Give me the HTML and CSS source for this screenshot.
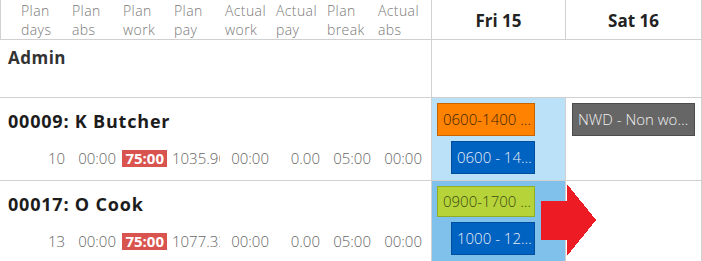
FILE: index.html
```html
<!DOCTYPE html>
<html lang="en">
<head>
  <meta charset="UTF-8">
  <title>Roster</title>
  <meta name="viewport" content="width=device-width, initial-scale=1.0" />
  <link rel="stylesheet" href="styles.css">
</head>
<body>
  <div class="sheet">
    <!-- header -->
    <div class="row head">
      <div class="left head-left">
        <div class="cols">
          <div class="hcol">Plan<br>days</div>
          <div class="hcol">Plan<br>abs</div>
          <div class="hcol">Plan<br>work</div>
          <div class="hcol">Plan<br>pay</div>
          <div class="hcol">Actual<br>work</div>
          <div class="hcol">Actual<br>pay</div>
          <div class="hcol">Plan<br>break</div>
          <div class="hcol">Actual<br>abs</div>
        </div>
      </div>
      <div class="day">Fri 15</div>
      <div class="day last">Sat 16</div>
    </div>

    <!-- group -->
    <div class="row group">
      <div class="left"><div class="group-name">Admin</div></div>
      <div class="span-days"></div>
    </div>

    <div class="row emp">
      <div class="left">
        <div class="emp-name">00009: K Butcher</div>
        <div class="cols data">
          <div class="dcol">10</div>
          <div class="dcol">00:00</div>
          <div class="dcol"><span class="over">75:00</span></div>
          <div class="dcol">1035.90</div>
          <div class="dcol">00:00</div>
          <div class="dcol">0.00</div>
          <div class="dcol">05:00</div>
          <div class="dcol">00:00</div>
        </div>
      </div>
      <div class="cell fri light">
        <div class="shift orange">0600-1400 …</div>
        <div class="shift blue">0600 - 14…</div>
      </div>
      <div class="cell sat">
        <div class="shift grey">NWD - Non wo…</div>
      </div>
    </div>

    <div class="row emp">
      <div class="left">
        <div class="emp-name">00017: O Cook</div>
        <div class="cols data">
          <div class="dcol">13</div>
          <div class="dcol">00:00</div>
          <div class="dcol"><span class="over">75:00</span></div>
          <div class="dcol">1077.33</div>
          <div class="dcol">00:00</div>
          <div class="dcol">0.00</div>
          <div class="dcol">05:00</div>
          <div class="dcol">00:00</div>
        </div>
      </div>
      <div class="cell fri mid">
        <div class="shift green">0900-1700 …</div>
        <div class="shift blue">1000 - 12…</div>
      </div>
      <div class="cell sat"></div>
    </div>
  </div>

  <svg class="arrow" width="56" height="74" viewBox="0 0 56 74" shape-rendering="crispEdges">
    <polygon points="0,17 26,17 26,0 55,36 26,72 26,56 0,56" fill="#ed1c24"/>
  </svg>
</body>
</html>
```

FILE: styles.css
```css
html, body {
    margin: 0;
    padding: 0;
    background: #fff;
}

body {
    font-family: "Open Sans", "Lato", sans-serif;
    color: #222;
    position: relative;
    width: 702px;
    height: 261px;
    overflow: hidden;
}

.sheet {
    display: flex;
    flex-direction: column;
}

.row {
    display: grid;
    grid-template-columns: 431px 134px 137px;
    border-bottom: 1px solid #d0d0d0;
}

.row:last-child {
    border-bottom: none;
}

.head {
    height: 39px;
}

.head-left {
    border-left: 1px solid #d0d0d0;
    box-sizing: border-box;
}

.cols {
    display: flex;
    padding-left: 16px;
}

.hcol {
    width: 51px;
    box-sizing: border-box;
    padding: 1px 0 0 4px;
    font-size: 14px;
    line-height: 19px;
    letter-spacing: 0.4px;
    font-weight: 300;
    color: #7a7a7a;
    white-space: nowrap;
}

.day {
    border-left: 1px solid #d0d0d0;
    text-align: center;
    font-weight: 700;
    font-size: 17px;
    padding-top: 9px;
    color: #222;
}

.day.last,
.cell.sat {
    border-right: 1px solid #d0d0d0;
}

.group {
    height: 57px;
}

.group-name {
    padding: 6px 0 0 8px;
    font-size: 17px;
    letter-spacing: 0.5px;
    font-weight: 700;
    color: #333;
}

.span-days {
    grid-column: 2 / 4;
    border-left: 1px solid #d0d0d0;
    border-right: 1px solid #d0d0d0;
}

.emp {
    height: 82px;
}

.emp:last-child {
    height: 80px;
}

.emp-name {
    padding: 12px 0 0 8px;
    font-size: 18px;
    line-height: 22px;
    letter-spacing: 0.8px;
    font-weight: 700;
    color: #1c1c1c;
}

.data {
    margin-top: 17px;
}

.dcol {
    width: 51px;
    box-sizing: border-box;
    padding: 0 2px 0 3px;
    text-align: right;
    font-size: 15px;
    line-height: 18px;
    font-weight: 300;
    color: #666;
    white-space: nowrap;
    overflow: hidden;
}

.over {
    display: inline-block;
    background: #d9534f;
    color: #fff;
    font-weight: 700;
    padding: 0 3px;
    line-height: 17px;
}

.cell {
    border-left: 1px solid #d0d0d0;
    padding: 5px 30px 0 5px;
    display: flex;
    flex-direction: column;
    gap: 5px;
}

.cell.sat {
    padding: 5px 6px 0 6px;
}

.light {
    background: #bae1f7;
}

.mid {
    background: #80c1eb;
}

.shift {
    height: 33px;
    box-sizing: border-box;
    border: 1px solid;
    padding: 0 5px;
    font-size: 15px;
    line-height: 31px;
    font-weight: 300;
    white-space: nowrap;
    overflow: hidden;
}

.shift.blue {
    margin-left: 14px;
    background: #0062c1;
    border-color: #004e9c;
    color: #e8eef6;
}

.shift.orange {
    background: #ff8200;
    border-color: #c86400;
    color: #3a2400;
}

.shift.green {
    height: 31px;
    line-height: 29px;
    background: #b6d43a;
    border-color: #8fae26;
    color: #3c4a10;
}

.shift.grey {
    background: #666;
    border-color: #4c4c4c;
    color: #f0f0f0;
}

.arrow {
    position: absolute;
    left: 541px;
    top: 184px;
}
```
